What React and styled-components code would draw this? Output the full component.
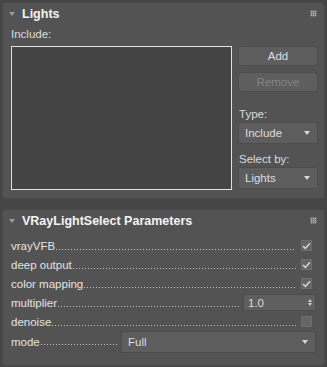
import React from 'react';
import styled, { createGlobalStyle } from 'styled-components';

const GlobalStyle = createGlobalStyle`
  html, body {
    margin: 0;
    padding: 0;
    background: #454545;
  }
  body {
    font-family: "Liberation Sans", Arial, sans-serif;
    font-size: 11.5px;
    color: #dcdcdc;
  }
`;

const Page = styled.div`
  width: 327px;
  height: 367px;
  padding: 3px 3px 0 3px;
  box-sizing: border-box;
  display: flex;
  flex-direction: column;
  gap: 12px;
`;

const Panel = styled.div`
  background: #535353;
  border-radius: 3px;
  box-shadow: 0 0 0 1px #4a4a4a;
`;

const Header = styled.div`
  height: 21px;
  display: flex;
  align-items: center;
  padding: 1px 8px 0 6px;
  box-sizing: border-box;
  gap: 7px;
`;

const Collapse = styled.span`
  width: 0;
  height: 0;
  border-left: 3px solid transparent;
  border-right: 3px solid transparent;
  border-top: 4px solid #9c9c9c;
  margin-top: -1px;
`;

const Title = styled.span`
  flex: 1;
  font-weight: bold;
  font-size: 12.5px;
  color: #f4f4f4;
`;

const Grip = styled.span`
  display: grid;
  grid-template-columns: repeat(3, 1px);
  gap: 1px;
  margin-top: -1px;
  > i {
    width: 1px;
    height: 1px;
    background: #c0c0c0;
    box-shadow: 0 0 0 0.5px #8a8a8a;
  }
`;

const LightsBody = styled.div`
  display: grid;
  grid-template-columns: 221px 78px;
  column-gap: 7px;
  padding: 3px 7px 8px 8px;
`;

const Label = styled.div`
  height: 14px;
  line-height: 14px;
  margin-top: ${(p) => p.$top || 0}px;
  margin-bottom: ${(p) => p.$bottom || 2}px;
`;

const ListBox = styled.div`
  height: 144px;
  box-sizing: border-box;
  border: 1px solid #e0e0e0;
  box-shadow: inset 0 0 0 1px #464646;
  background: #444444;
`;

const Side = styled.div`
  display: flex;
  flex-direction: column;
  padding-top: 1px;
`;

const Button = styled.div`
  height: 18px;
  border-radius: 3px;
  background: #5e5e5e;
  box-shadow: 0 0 0 1px #4d4d4d;
  display: flex;
  align-items: center;
  justify-content: center;
  color: ${(p) => (p.$disabled ? '#858585' : '#dedede')};
  margin-bottom: 8px;
`;

const Select = styled.div`
  height: 20px;
  width: ${(p) => (p.$width ? `${p.$width}px` : 'auto')};
  flex: none;
  background: #5d5d5d;
  box-shadow: 0 0 0 1px #4c4c4c;
  display: flex;
  align-items: center;
  padding: 0 7px 0 6px;
  box-sizing: border-box;
  color: #dedede;
  > span {
    flex: 1;
  }
`;

const Arrow = styled.span`
  flex: none !important;
  width: 0;
  height: 0;
  border-left: 3px solid transparent;
  border-right: 3px solid transparent;
  border-top: 4px solid #d8d8d8;
`;

const ParamsBody = styled.div`
  display: flex;
  flex-direction: column;
  padding: 5px 9px 12px 8px;
`;

const Row = styled.div`
  height: ${(p) => p.$h || 19}px;
  display: flex;
  align-items: center;
`;

const RowLabel = styled.span`
  white-space: nowrap;
  color: #e4e4e4;
`;

const Leader = styled.span`
  flex: 1;
  align-self: stretch;
  background-image: linear-gradient(to right, #c4c4c4 1px, transparent 1px);
  background-size: 3px 1px;
  background-repeat: repeat-x;
  background-position: 1px 13px;
  margin-right: ${(p) => p.$gap || 5}px;
`;

const Check = styled.span`
  width: 11px;
  height: 11px;
  margin-right: 3px;
  background: #646464;
  box-shadow: inset 0 0 0 1px #6e6e6e;
  display: flex;
  align-items: center;
  justify-content: center;
`;

const Spinner = styled.div`
  width: 71px;
  height: 15px;
  box-sizing: border-box;
  background: #5f5f5f;
  box-shadow: 0 0 0 1px #4c4c4c;
  display: flex;
  align-items: center;
  padding: 0 3px 0 4px;
  color: #dcdcdc;
  > span {
    flex: 1;
  }
`;

const SpinArrows = styled.span`
  flex: none !important;
  display: flex;
  flex-direction: column;
  gap: 1px;
  > i {
    width: 0;
    height: 0;
    border-left: 2px solid transparent;
    border-right: 2px solid transparent;
  }
  > i:first-child {
    border-bottom: 3px solid #cfcfcf;
  }
  > i:last-child {
    border-top: 3px solid #cfcfcf;
  }
`;

const CheckMark = () => (
  <svg width="9" height="8" viewBox="0 0 9 8">
    <path d="M1 4.2 L3.4 6.4 L8 1.2" fill="none" stroke="#d0d0d0" strokeWidth="1.6" />
  </svg>
);

const RolloutHeader = ({ title }) => (
  <Header>
    <Collapse />
    <Title>{title}</Title>
    <Grip>
      {Array.from({ length: 9 }).map((_, i) => (
        <i key={i} />
      ))}
    </Grip>
  </Header>
);

const CheckRow = ({ label, checked }) => (
  <Row>
    <RowLabel>{label}</RowLabel>
    <Leader />
    <Check>{checked && <CheckMark />}</Check>
  </Row>
);

const App = () => (
  <>
    <GlobalStyle />
    <Page>
      <Panel>
        <RolloutHeader title="Lights" />
        <LightsBody>
          <Label $bottom={5}>Include:</Label>
          <div />
          <ListBox />
          <Side>
            <Button>Add</Button>
            <Button $disabled>Remove</Button>
            <Label $top={8}>Type:</Label>
            <Select>
              <span>Include</span>
              <Arrow />
            </Select>
            <Label $top={9}>Select by:</Label>
            <Select>
              <span>Lights</span>
              <Arrow />
            </Select>
          </Side>
        </LightsBody>
      </Panel>
      <Panel>
        <RolloutHeader title="VRayLightSelect Parameters" />
        <ParamsBody>
          <CheckRow label="vrayVFB" checked />
          <CheckRow label="deep output" checked />
          <CheckRow label="color mapping" checked />
          <Row>
            <RowLabel>multiplier</RowLabel>
            <Leader $gap={4} />
            <Spinner>
              <span>1.0</span>
              <SpinArrows>
                <i />
                <i />
              </SpinArrows>
            </Spinner>
          </Row>
          <CheckRow label="denoise" />
          <Row $h={22}>
            <RowLabel>mode</RowLabel>
            <Leader $gap={4} />
            <Select $width={193}>
              <span>Full</span>
              <Arrow />
            </Select>
          </Row>
        </ParamsBody>
      </Panel>
    </Page>
  </>
);

export default App;
